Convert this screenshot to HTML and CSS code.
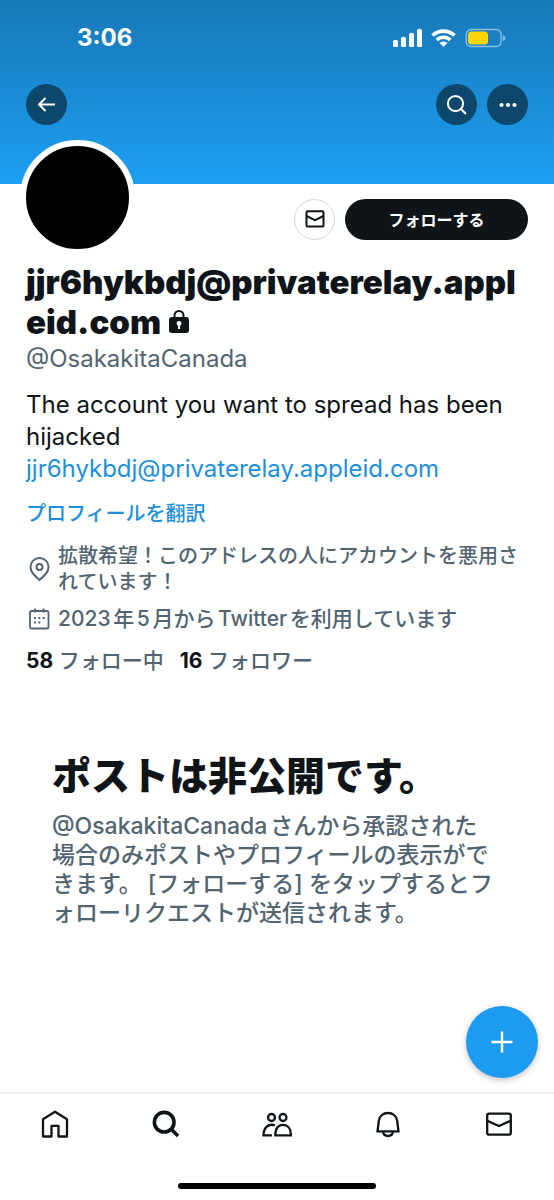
FILE: index.html
```html
<!DOCTYPE html>
<html lang="ja">
<head>
<meta charset="utf-8">
<meta name="viewport" content="width=device-width, initial-scale=1">
<title>プロフィール</title>
<link rel="stylesheet" href="styles.css">
</head>
<body>
<div class="screen">
  <header class="banner">
    <div class="status">
      <span class="clock">3:06</span>
      <div class="indicators">
        <svg width="30" height="20" viewBox="0 0 30 20" fill="#fff"><rect x="0" y="12" width="5" height="7" rx="1.5"/><rect x="8" y="9" width="5" height="10" rx="1.5"/><rect x="16" y="5" width="5" height="14" rx="1.5"/><rect x="24" y="1" width="5" height="18" rx="1.500"/></svg>
        <svg width="26" height="20" viewBox="0 0 26 20" fill="none" stroke="#fff" stroke-width="3.600"><path d="M1.500 7.500a16 16 0 0 1 22 0"/><path d="M5.800 12a9.600 9.600 0 0 1 13.400 0"/><path d="M12.500 19l-4-4a5.800 5.800 0 0 1 8 0z" fill="#fff" stroke="none"/></svg>
        <svg width="41" height="20" viewBox="0 0 41 20"><rect x="1.200" y="1.500" width="35" height="17" rx="5" fill="none" stroke="#fff" stroke-opacity=".5" stroke-width="1.300"/><rect x="3" y="3.500" width="20" height="13" rx="3.500" fill="#ffd60a"/><path d="M38 7c3 1 3 5 0 6z" fill="#fff" fill-opacity=".5"/></svg>
      </div>
    </div>
    <nav class="toolbar">
      <button class="round" aria-label="戻る"><svg width="21" height="21" viewBox="0 0 21 21" fill="none" stroke="#fff" stroke-width="2"><path d="M19 10.500H3M9.500 4L3 10.500l6.500 6.500"/></svg></button>
      <span class="spacer"></span>
      <button class="round" aria-label="検索"><svg width="22" height="22" viewBox="0 0 22 22" fill="none" stroke="#fff" stroke-width="2"><circle cx="9.500" cy="9.500" r="7.600"/><path d="M15 15l5 5"/></svg></button>
      <button class="round" aria-label="その他"><svg width="20" height="6" viewBox="0 0 20 6" fill="#fff"><circle cx="3.500" cy="3" r="2.100"/><circle cx="10" cy="3" r="2.100"/><circle cx="16.500" cy="3" r="2.100"/></svg></button>
    </nav>
  </header>
  <main class="profile">
    <div class="actions">
      <div class="avatar" role="img" aria-label="アバター"></div>
      <span class="spacer"></span>
      <button class="message" aria-label="メッセージ"><svg width="20" height="18" viewBox="0 0 20 18" fill="none" stroke="#0f1419" stroke-width="2"><rect x="1.500" y="1.200" width="17" height="15.400" rx="1.200"/><path d="M1.500 6l8.500 4.200L18.500 6"/></svg></button>
      <button class="follow">フォローする</button>
    </div>
    <h1 class="name">jjr6hykbdj@privaterelay.appleid.com <svg class="lock" width="22" height="25" viewBox="0 0 22 25"><path d="M6.500 9V6.500a4.500 4.500 0 0 1 9 0V9" fill="none" stroke="#0f1419" stroke-width="2"/><rect x="1" y="8" width="20" height="16" rx="3" fill="#0f1419"/><circle cx="11" cy="14.500" r="2.400" fill="#fff"/><rect x="10" y="15" width="2" height="5" fill="#fff"/></svg></h1>
    <p class="handle">@OsakakitaCanada</p>
    <p class="bio">The account you want to spread has been hijacked<br><a href="#">jjr6hykbdj@privaterelay.appleid.com</a></p>
    <a class="translate" href="#">プロフィールを翻訳</a>
    <div class="meta">
      <svg width="24" height="26" viewBox="0 0 24 26" fill="none" stroke="#536471" stroke-width="2"><path d="M13.500 24C8.500 19.500 4.500 16.200 4.500 11a9 9 0 0 1 18 0c0 5.200-4 8.500-9 13z"/><circle cx="13.500" cy="11" r="3"/></svg>
      <span>拡散希望！このアドレスの人にアカウントを悪用されています！</span>
    </div>
    <div class="meta joined">
      <svg width="24" height="24" viewBox="0 0 24 24" fill="none" stroke="#536471" stroke-width="1.800"><rect x="4" y="4" width="18.500" height="17.500" rx="1.800"/><path d="M9 1.500v4M17.500 1.500v4"/><path d="M8 15.500h2m2.300 0h2M8 11h2m2.300 0h2m2.300 0h2" stroke-width="2"/></svg>
      <span>2023年5月からTwitterを利用しています</span>
    </div>
    <div class="counts">
      <a href="#"><b>58</b> フォロー中</a>
      <a href="#"><b>16</b> フォロワー</a>
    </div>
    <section class="locked">
      <h2>ポストは非公開です。</h2>
      <p>@OsakakitaCanadaさんから承認された<br>場合のみポストやプロフィールの表示がで<br>きます。 [フォローする] をタップするとフ<br>ォローリクエストが送信されます。</p>
    </section>
  </main>
  <footer class="bottom">
    <button class="compose" aria-label="ポストする"><svg width="24" height="24" viewBox="0 0 24 24" stroke="#fff" stroke-width="2.400"><path d="M12 1.500v21M1.500 12h21"/></svg></button>
    <nav class="tabs">
      <a href="#" aria-label="ホーム"><svg width="28" height="28" viewBox="0 0 28 28" fill="none" stroke="#0f1419" stroke-width="2.300" stroke-linejoin="round"><path d="M14 1.700L2 9.200v17.300h8.500V15.800h7v10.700H26V9.200z"/></svg></a>
      <a href="#" aria-label="検索"><svg width="28" height="28" viewBox="0 0 28 28" fill="none" stroke="#0f1419" stroke-width="3.600"><circle cx="12.200" cy="12.200" r="9.800"/><path d="M19 19l7 7"/></svg></a>
      <a href="#" aria-label="コミュニティ"><svg width="32" height="28" viewBox="0 0 32 28" fill="none" stroke="#0f1419" stroke-width="2.300"><circle cx="10.500" cy="7.500" r="3.500"/><circle cx="22" cy="7.500" r="3.500"/><path d="M14.300 25.300c-.3-7 3.200-10.500 7.700-10.500s8 3.500 8 10.500z"/><path d="M13.800 15.300C7.500 13.300 2.500 17.500 2.500 25.300H11"/></svg></a>
      <a href="#" aria-label="通知"><svg width="28" height="28" viewBox="0 0 28 28" fill="none" stroke="#0f1419" stroke-width="2.300"><path d="M3.500 21.300l1.300-10.500c.6-5 4.500-7.800 9.200-7.800s8.600 2.800 9.200 7.800l1.300 10.500z"/><path d="M9 22c1 5.300 9 5.300 10 0"/></svg></a>
      <a href="#" aria-label="メッセージ"><svg width="28" height="28" viewBox="0 0 28 28" fill="none" stroke="#0f1419" stroke-width="2.300"><rect x="2.200" y="3.700" width="23.600" height="21" rx="2"/><path d="M2.200 10.700L14 16l11.800-5.300"/></svg></a>
    </nav>
    <div class="home-bar"></div>
  </footer>
</div>
</body>
</html>
```
FILE: styles.css
```css
* { box-sizing: border-box; }
body {
  margin: 0;
  background: #fff;
  color: #0f1419;
  font-family: Inter, "Noto Sans CJK JP", sans-serif;
  text-autospace: normal;
}
h1, h2, p { margin: 0; }
a { color: #1d8fdc; text-decoration: none; }
button { padding: 0; border: 0; font: inherit; cursor: pointer; }
svg { display: block; flex: none; }
.spacer { flex: 1; }
.screen { display: flex; flex-direction: column; min-height: 100vh; }

.banner {
  height: 184px;
  background: linear-gradient(#1878b6, #1d9ff3);
}
.status {
  display: flex;
  justify-content: space-between;
  align-items: center;
  height: 84px;
  padding: 0 48px 8px 77px;
}
.clock { color: #fff; font-size: 24px; font-weight: 700; line-height: 28px; }
.indicators { display: flex; gap: 8px; }
.toolbar { display: flex; gap: 10px; padding: 0 26px; }
.round {
  display: grid;
  place-items: center;
  width: 41px;
  height: 41px;
  border-radius: 50%;
  background: #0e476c;
}

.profile { flex: 1; padding: 0 26px; }
.actions { display: flex; align-items: center; gap: 10px; height: 70px; }
.avatar {
  width: 115px;
  height: 115px;
  margin: -44px 0 0 -6px;
  border: 6px solid #fff;
  border-radius: 50%;
  background: #000;
}
.message {
  display: grid;
  place-items: center;
  width: 41px;
  height: 41px;
  border: 1px solid #cfd9de;
  border-radius: 50%;
  background: #fff;
}
.follow {
  width: 183px;
  height: 41px;
  border-radius: 21px;
  background: #0f1419;
  color: #fff;
  font-size: 16px;
  font-weight: 700;
}
.name {
  padding: 8px 0 2px;
  font-size: 33px;
  font-weight: 900;
  line-height: 40px;
  word-break: break-all;
}
.lock { display: inline-block; vertical-align: baseline; }
.handle { color: #536471; font-size: 24px; line-height: 30px; }
.bio { margin-top: 15px; font-size: 24px; line-height: 32px; }
.translate {
  display: block;
  margin-top: 14px;
  font-size: 20px;
  font-weight: 500;
  line-height: 30px;
}
.meta {
  display: flex;
  align-items: center;
  gap: 8px;
  margin-top: 14px;
  color: #536471;
  font-size: 20px;
  font-weight: 500;
  line-height: 26px;
}
.meta.joined { margin-top: 11px; font-size: 21px; }
.counts {
  display: flex;
  gap: 16px;
  margin-top: 16px;
  font-size: 21px;
  font-weight: 500;
  line-height: 26px;
}
.counts a { color: #536471; }
.counts b { color: #0f1419; font-weight: 700; }
.locked { padding: 78px 26px 40px; }
.locked h2 { font-size: 39px; font-weight: 900; line-height: 48px; }
.locked p {
  margin-top: 12px;
  color: #536471;
  font-size: 23px;
  font-weight: 500;
  line-height: 29px;
  white-space: nowrap;
}

.bottom { position: sticky; bottom: 0; border-top: 2px solid #eff3f4; background: #fff; }
.compose {
  position: absolute;
  right: 16px;
  bottom: calc(100% + 16px);
  display: grid;
  place-items: center;
  width: 72px;
  height: 72px;
  border-radius: 50%;
  background: #1d9bf0;
  box-shadow: 0 2px 6px rgba(0, 0, 0, .25);
}
.tabs { display: grid; grid-template-columns: repeat(5, 1fr); }
.tabs a { display: grid; place-items: center; height: 60px; }
.home-bar {
  width: 198px;
  height: 6px;
  margin: 29px auto 11px;
  border-radius: 3px;
  background: #000;
}
```
